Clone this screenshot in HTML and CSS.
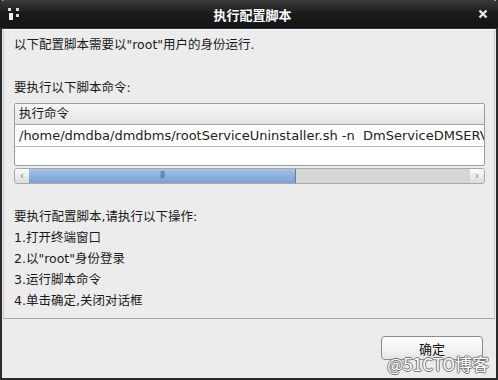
FILE: index.html
```html
<!DOCTYPE html>
<html lang="zh-CN">

<head>
    <meta charset="UTF-8">
    <meta name="viewport" content="width=device-width, initial-scale=1.0">
    <title>执行配置脚本</title>
    <link rel="stylesheet" href="styles.css">
</head>

<body>
    <div class="window">
        <div class="titlebar">
            <svg class="app-icon" width="14" height="14" viewBox="0 0 14 14">
                <rect x="1" y="1" width="3" height="3" fill="#d8d8d8"/>
                <rect x="9" y="1" width="3" height="3" fill="#d8d8d8"/>
                <rect x="9" y="7" width="3" height="3" fill="#d8d8d8"/>
                <rect x="2" y="6" width="4" height="7" fill="#f0f0f0"/>
            </svg>
            <span class="title">执行配置脚本</span>
            <svg class="close" width="10" height="10" viewBox="0 0 10 10">
                <path d="M1.5 1.5 L8.5 8.5 M8.5 1.5 L1.5 8.5" stroke="#e6e6e6" stroke-width="2.4"/>
            </svg>
        </div>

        <div class="panel">
            <p class="line">以下配置脚本需要以"root"用户的身份运行.</p>
            <p class="line gap">要执行以下脚本命令:</p>

            <div class="table">
                <div class="row head">执行命令</div>
                <div class="row cmd">/home/dmdba/dmdbms/rootServiceUninstaller.sh -n &nbsp;DmServiceDMSERVER</div>
                <div class="row empty"></div>
            </div>

            <div class="scrollbar">
                <div class="arrow">&#8249;</div>
                <div class="thumb">III</div>
                <div class="track"></div>
                <div class="arrow">&#8250;</div>
            </div>

            <div class="steps">
                <p>要执行配置脚本,请执行以下操作:</p>
                <p>1.打开终端窗口</p>
                <p>2.以"root"身份登录</p>
                <p>3.运行脚本命令</p>
                <p>4.单击确定,关闭对话框</p>
            </div>
        </div>

        <div class="footer">
            <button class="ok">确定</button>
        </div>

        <div class="watermark">@51CTO博客</div>
    </div>
</body>

</html>
```

FILE: styles.css
```css
body {
    margin: 0;
    padding: 0;
    background: #ececec;
    font-family: "DejaVu Sans", "Noto Sans CJK SC", sans-serif;
    font-size: 12.5px;
    color: #1a1a1a;
}

.window {
    position: relative;
    width: 498px;
    height: 380px;
    box-sizing: border-box;
    display: flex;
    flex-direction: column;
    background: #ececec;
    border-left: 2px solid #2b2b2b;
    border-right: 2px solid #2b2b2b;
    border-bottom: 2px solid #2b2b2b;
}

.titlebar {
    height: 28px;
    margin: 0 -2px;
    display: flex;
    align-items: center;
    padding: 0 10px 0 7px;
    background: linear-gradient(#3c3c3c, #1c1c1c 45%, #141414);
    border-bottom: 1px solid #2c3440;
    border-radius: 5px 5px 0 0;
}

.app-icon {
    flex: none;
}

.title {
    flex: 1;
    text-align: center;
    color: #fff;
    font-weight: bold;
    font-size: 13px;
    margin-left: 6px;
}

.close {
    flex: none;
}

.panel {
    margin: 0 1px;
    padding: 7px 9px 0 10px;
    height: 290px;
    box-sizing: border-box;
    border-top: 1px solid #fafafa;
    border-left: 1px solid #c8c8c8;
    border-right: 1px solid #c8c8c8;
    border-bottom: 1px solid #a8a8a8;
}

.line {
    margin: 0;
    line-height: 16px;
}

.gap {
    margin-top: 27px;
}

.table {
    margin-top: 7px;
    border: 1px solid #9c9c9c;
    border-radius: 2px;
    background: #fff;
    overflow: hidden;
}

.row {
    white-space: nowrap;
    padding-left: 4px;
    box-sizing: border-box;
}

.head {
    height: 21px;
    line-height: 20px;
    background: linear-gradient(#f6f6f6, #e4e4e4);
    border-bottom: 1px solid #a4a4a4;
}

.cmd {
    height: 22px;
    line-height: 21px;
    font-size: 13px;
    color: #222;
    border-bottom: 1px solid #b4bcc8;
}

.empty {
    height: 18px;
}

.scrollbar {
    margin-top: 2px;
    height: 16px;
    display: flex;
    border: 1px solid #a8a8a8;
    border-radius: 3px;
    box-sizing: border-box;
    overflow: hidden;
    background: #d6d6d6;
}

.arrow {
    width: 14px;
    flex: none;
    text-align: center;
    font-size: 11px;
    line-height: 13px;
    color: #777;
    background: linear-gradient(#fbfbfb, #dcdcdc);
}

.thumb {
    width: 266px;
    flex: none;
    text-align: center;
    font-size: 8px;
    line-height: 14px;
    letter-spacing: -1px;
    color: #4a6a94;
    background: linear-gradient(#a9c5e6, #8cb1dc 50%, #7ba2d2);
    border-right: 1px solid #5d7fa8;
}

.track {
    flex: 1;
}

.steps {
    margin-top: 22px;
}

.steps p {
    margin: 0;
    line-height: 21px;
}

.footer {
    flex: 1;
    display: flex;
    justify-content: flex-end;
    align-items: flex-start;
    padding: 17px 13px 0 0;
}

.ok {
    width: 102px;
    height: 24px;
    font-family: "DejaVu Sans", "Noto Sans CJK SC", sans-serif;
    font-size: 13px;
    color: #111;
    border: 1px solid #8c8c8c;
    border-radius: 4px;
    background: linear-gradient(#ffffff, #f2f2f2 60%, #e4e4e4);
    padding: 0;
}

.watermark {
    position: absolute;
    right: 7px;
    bottom: 2px;
    font-family: "Noto Sans CJK SC", sans-serif;
    font-size: 17px;
    color: #fff;
    text-shadow: 1px 0 #777, -1px 0 #777, 0 1px #777, 0 -1px #777;
}
```
